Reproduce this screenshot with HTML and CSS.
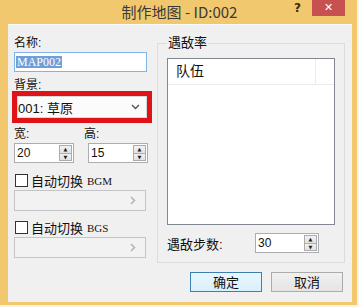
FILE: index.html
```html
<!DOCTYPE html>
<html lang="zh">
<head>
  <meta charset="UTF-8">
  <title>制作地图 - ID:002</title>
  <link rel="stylesheet" href="styles.css">
</head>
<body>
  <div class="window">
    <div class="titlebar">
      <div></div>
      <div class="title">制作地图 - ID:002</div>
      <div class="controls">
        <span class="help">?</span>
        <span class="close">✕</span>
      </div>
    </div>

    <div class="client">
      <div class="top">
        <div class="left">
          <div class="label first">名称:</div>
          <div class="input"><span class="sel">MAP002</span></div>

          <div class="label bg-label">背景:</div>
          <div class="redbox">
            <div class="combo">
              <span>001: 草原</span>
              <svg width="9" height="6" viewBox="0 0 9 6"><polyline points="1,1 4.5,4.5 8,1" fill="none" stroke="#555" stroke-width="1.4"/></svg>
            </div>
          </div>

          <div class="pair labels">
            <div class="label">宽:</div>
            <div class="label">高:</div>
          </div>
          <div class="pair">
            <div class="spin"><span>20</span><div class="arrows"><b>▲</b><b>▼</b></div></div>
            <div class="spin"><span>15</span><div class="arrows"><b>▲</b><b>▼</b></div></div>
          </div>

          <label class="check first-check"><span class="box"></span>自动切换 <span class="latin">BGM</span></label>
          <div class="picker">
            <svg width="6" height="9" viewBox="0 0 6 9"><polyline points="1,1 4.5,4.5 1,8" fill="none" stroke="#b5b5b5" stroke-width="1.6"/></svg>
          </div>

          <label class="check"><span class="box"></span>自动切换 <span class="latin">BGS</span></label>
          <div class="picker">
            <svg width="6" height="9" viewBox="0 0 6 9"><polyline points="1,1 4.5,4.5 1,8" fill="none" stroke="#b5b5b5" stroke-width="1.6"/></svg>
          </div>
        </div>

        <fieldset class="group">
          <legend>遇敌率</legend>
          <div class="list">
            <div class="list-head"><span class="col">队伍</span><span class="col-rest"></span></div>
          </div>
          <div class="steps">
            <span class="steps-label">遇敌步数:</span>
            <div class="spin wide"><span>30</span><div class="arrows"><b>▲</b><b>▼</b></div></div>
          </div>
        </fieldset>
      </div>

      <div class="buttons">
        <button class="btn default">确定</button>
        <button class="btn">取消</button>
      </div>
    </div>
  </div>
</body>
</html>
```

FILE: styles.css
```css
  body {
    margin: 0;
    background-color: #f7f3ea;
    font-family: "Liberation Sans", "Noto Sans CJK SC", sans-serif;
    font-size: 12px;
    color: #111;
  }
  .window {
    width: 357px;
    height: 305px;
    background-color: #f2c86e;
    display: flex;
    flex-direction: column;
  }
  .titlebar {
    height: 24px;
    display: grid;
    grid-template-columns: 1fr auto 1fr;
  }
  .title {
    font-family: "Noto Sans CJK SC", sans-serif;
    font-size: 15px;
    line-height: 24px;
    color: #3a3a3a;
    padding-left: 2px;
  }
  .controls {
    display: flex;
    justify-content: flex-end;
    align-items: flex-start;
    padding-right: 12px;
  }
  .help {
    font-family: "DejaVu Sans", sans-serif;
    font-weight: bold;
    font-size: 12px;
    color: #3a2a10;
    margin-top: 1px;
    margin-right: 11px;
  }
  .close {
    width: 33px;
    height: 16px;
    background-color: #c75050;
    color: #fff;
    font-family: "DejaVu Sans", sans-serif;
    font-size: 11px;
    font-weight: bold;
    line-height: 16px;
    text-align: center;
  }
  .client {
    flex: 1;
    margin: 0 5px 3px 8px;
    background-color: #f0f0f0;
    border-top: 1px solid #fbfbfb;
    display: flex;
    flex-direction: column;
  }
  .top {
    display: flex;
    align-items: flex-start;
  }
  .left {
    width: 142px;
    margin-left: 4px;
    display: flex;
    flex-direction: column;
  }
  .label {
    line-height: 14px;
    height: 14px;
    padding-left: 2px;
  }
  .label.first {
    margin-top: 11px;
  }
  .input {
    margin: 2px 0 0 2px;
    width: 130px;
    height: 18px;
    background: #fff;
    border: 1px solid #7eb4ea;
    display: flex;
    align-items: center;
    padding-left: 1px;
  }
  .sel {
    background-color: #6f9fd8;
    color: #fff;
    font-family: "Liberation Serif", serif;
    line-height: 12px;
    padding: 0 1px;
  }
  .bg-label {
    margin-top: 6px;
    height: 13px;
  }
  .redbox {
    width: 130px;
    height: 22px;
    border: 5px solid #de1419;
  }
  .combo {
    height: 20px;
    border: 1px solid #d8d8d8;
    background: #fbfbfb;
    display: flex;
    align-items: center;
    justify-content: space-between;
    padding: 0 6px 0 0;
    font-size: 13px;
  }
  .pair {
    display: flex;
    gap: 14px;
    padding-left: 2px;
  }
  .pair.labels {
    margin-top: 4px;
  }
  .pair.labels .label {
    width: 56px;
    padding-left: 0;
    margin-left: 0;
  }
  .pair .spin {
    margin-top: 2px;
  }
  .spin {
    width: 56px;
    height: 18px;
    border: 1px solid #abadb3;
    background: #fff;
    display: flex;
    justify-content: space-between;
    align-items: center;
    padding-left: 2px;
    box-sizing: content-box;
  }
  .spin.wide {
    width: 60px;
  }
  .spin span {
    font-size: 12px;
  }
  .arrows {
    width: 13px;
    height: 16px;
    margin-right: 1px;
    display: flex;
    flex-direction: column;
    gap: 0;
  }
  .arrows b {
    flex: 1;
    border: 1px solid #acacac;
    background: linear-gradient(#f2f2f2, #e2e2e2);
    font-size: 5px;
    line-height: 6px;
    text-align: center;
    color: #222;
    font-family: "DejaVu Sans", sans-serif;
  }
  .arrows b + b {
    border-top: none;
  }
  .check {
    display: flex;
    align-items: center;
    height: 13px;
    margin-top: 10px;
    padding-left: 3px;
    font-size: 13px;
  }
  .check.first-check {
    margin-top: 11px;
  }
  .box {
    width: 11px;
    height: 11px;
    border: 1px solid #333;
    background: #fff;
    margin-right: 3px;
  }
  .latin {
    font-family: "Liberation Serif", serif;
    font-size: 11px;
    margin-left: 4px;
  }
  .picker {
    margin: 3px 0 0 2px;
    height: 19px;
    border: 1px solid #c4c4c4;
    background: #f2f2f2;
    display: flex;
    align-items: center;
    justify-content: flex-end;
    padding-right: 9px;
    box-sizing: content-box;
    width: 121px;
  }
  .group {
    margin: 11px 0 0 3px;
    width: 168px;
    height: 218px;
    padding: 7px 9px 0 9px;
    border: 1px solid #dcdcdc;
  }
  .group legend {
    padding: 0 1px;
    margin-left: 0;
    font-size: 13px;
    line-height: 14px;
    height: 14px;
  }
  .list {
    height: 165px;
    border: 1px solid #828790;
    background: #fff;
    margin-top: 1px;
  }
  .list-head {
    height: 25px;
    border-bottom: 1px solid #ececec;
    display: flex;
  }
  .col {
    width: 139px;
    border-right: 1px solid #ececec;
    padding-left: 8px;
    line-height: 24px;
    font-size: 14px;
  }
  .steps {
    margin-top: 8px;
    display: flex;
    align-items: center;
  }
  .steps-label {
    width: 88px;
    font-size: 13px;
  }
  .buttons {
    display: flex;
    justify-content: flex-end;
    gap: 9px;
    margin-top: 9px;
    padding-right: 9px;
  }
  .btn {
    width: 72px;
    height: 20px;
    border: 1px solid #acacac;
    background: linear-gradient(#f0f0f0, #e5e5e5);
    font-family: "Noto Sans CJK SC", sans-serif;
    font-size: 13px;
    line-height: 16px;
    padding: 0;
    color: #111;
  }
  .btn.default {
    border-color: #3c7fb1;
    background: linear-gradient(#eaf6fd, #d9f0fc);
  }
```
